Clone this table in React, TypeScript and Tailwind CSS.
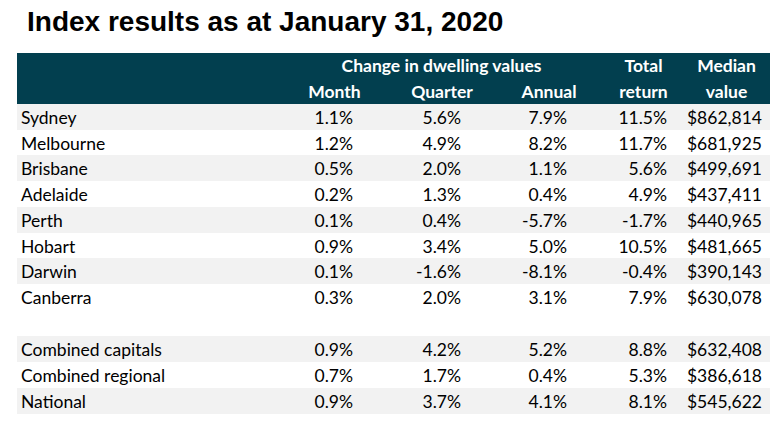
import React from "react";

const data: [string, string, string, string, string, string][] = [
  ["Sydney", "1.1%", "5.6%", "7.9%", "11.5%", "$862,814"],
  ["Melbourne", "1.2%", "4.9%", "8.2%", "11.7%", "$681,925"],
  ["Brisbane", "0.5%", "2.0%", "1.1%", "5.6%", "$499,691"],
  ["Adelaide", "0.2%", "1.3%", "0.4%", "4.9%", "$437,411"],
  ["Perth", "0.1%", "0.4%", "-5.7%", "-1.7%", "$440,965"],
  ["Hobart", "0.9%", "3.4%", "5.0%", "10.5%", "$481,665"],
  ["Darwin", "0.1%", "-1.6%", "-8.1%", "-0.4%", "$390,143"],
  ["Canberra", "0.3%", "2.0%", "3.1%", "7.9%", "$630,078"],
];
const combined: [string, string, string, string, string, string][] = [
  ["Combined capitals", "0.9%", "4.2%", "5.2%", "8.8%", "$632,408"],
  ["Combined regional", "0.7%", "1.7%", "0.4%", "5.3%", "$386,618"],
  ["National", "0.9%", "3.7%", "4.1%", "8.1%", "$545,622"],
];

const grid = "grid grid-cols-[283px_88px_108px_106px_83px_85px]";

function DataRow({ r, gray, h }: { r: string[]; gray: boolean; h: string }) {
  return (
    <div className={`${grid} items-center pt-[2px] ${h} ${gray ? "bg-[#f2f2f2]" : "bg-white"}`}>
      <div className="pl-[4px]">{r[0]}</div>
      <div className="text-right pr-[35px]">{r[1]}</div>
      <div className="text-right pr-[35px]">{r[2]}</div>
      <div className="text-right pr-[35px]">{r[3]}</div>
      <div className="text-right pr-[18px]">{r[4]}</div>
      <div className="text-right pr-[8px]">{r[5]}</div>
    </div>
  );
}

export default function App() {
  const heights = ["h-[26px]", "h-[25px]", "h-[26px]", "h-[26px]", "h-[26px]", "h-[25px]", "h-[26px]", "h-[26px]"];
  return (
    <div className="w-[770px] h-[429px] bg-white overflow-hidden">
      <div
        className="pl-[27px] pt-[6px] text-[28px] leading-[32px] font-bold text-black"
        style={{ fontFamily: '"Liberation Sans", Arial, sans-serif' }}
      >
        Index results as at January 31, 2020
      </div>
      <div
        className="ml-[17px] mt-[15px] text-[17.5px] leading-[22px] text-black"
        style={{ fontFamily: 'Lato, "Open Sans", sans-serif' }}
      >
        <div className="bg-[#023f4f] text-white font-bold h-[51px]">
          <div className={`${grid} h-[25px] items-center pt-[1px]`}>
            <div />
            <div className="col-span-3 text-center pr-[19px]">Change in dwelling values</div>
            <div className="text-center">Total</div>
            <div className="text-center pr-[2px]">Median</div>
          </div>
          <div className={`${grid} h-[26px] items-center pt-[1px]`}>
            <div />
            <div className="text-center pr-[19px]">Month</div>
            <div className="text-center">Quarter</div>
            <div className="text-center">Annual</div>
            <div className="text-center">return</div>
            <div className="text-center pr-[2px]">value</div>
          </div>
        </div>
        {data.map((r, i) => (
          <DataRow key={r[0]} r={r} gray={i % 2 === 0} h={heights[i]} />
        ))}
        <div className="h-[26px] bg-white" />
        {combined.map((r, i) => (
          <DataRow key={r[0]} r={r} gray={i % 2 === 0} h="h-[26px]" />
        ))}
      </div>
    </div>
  );
}
